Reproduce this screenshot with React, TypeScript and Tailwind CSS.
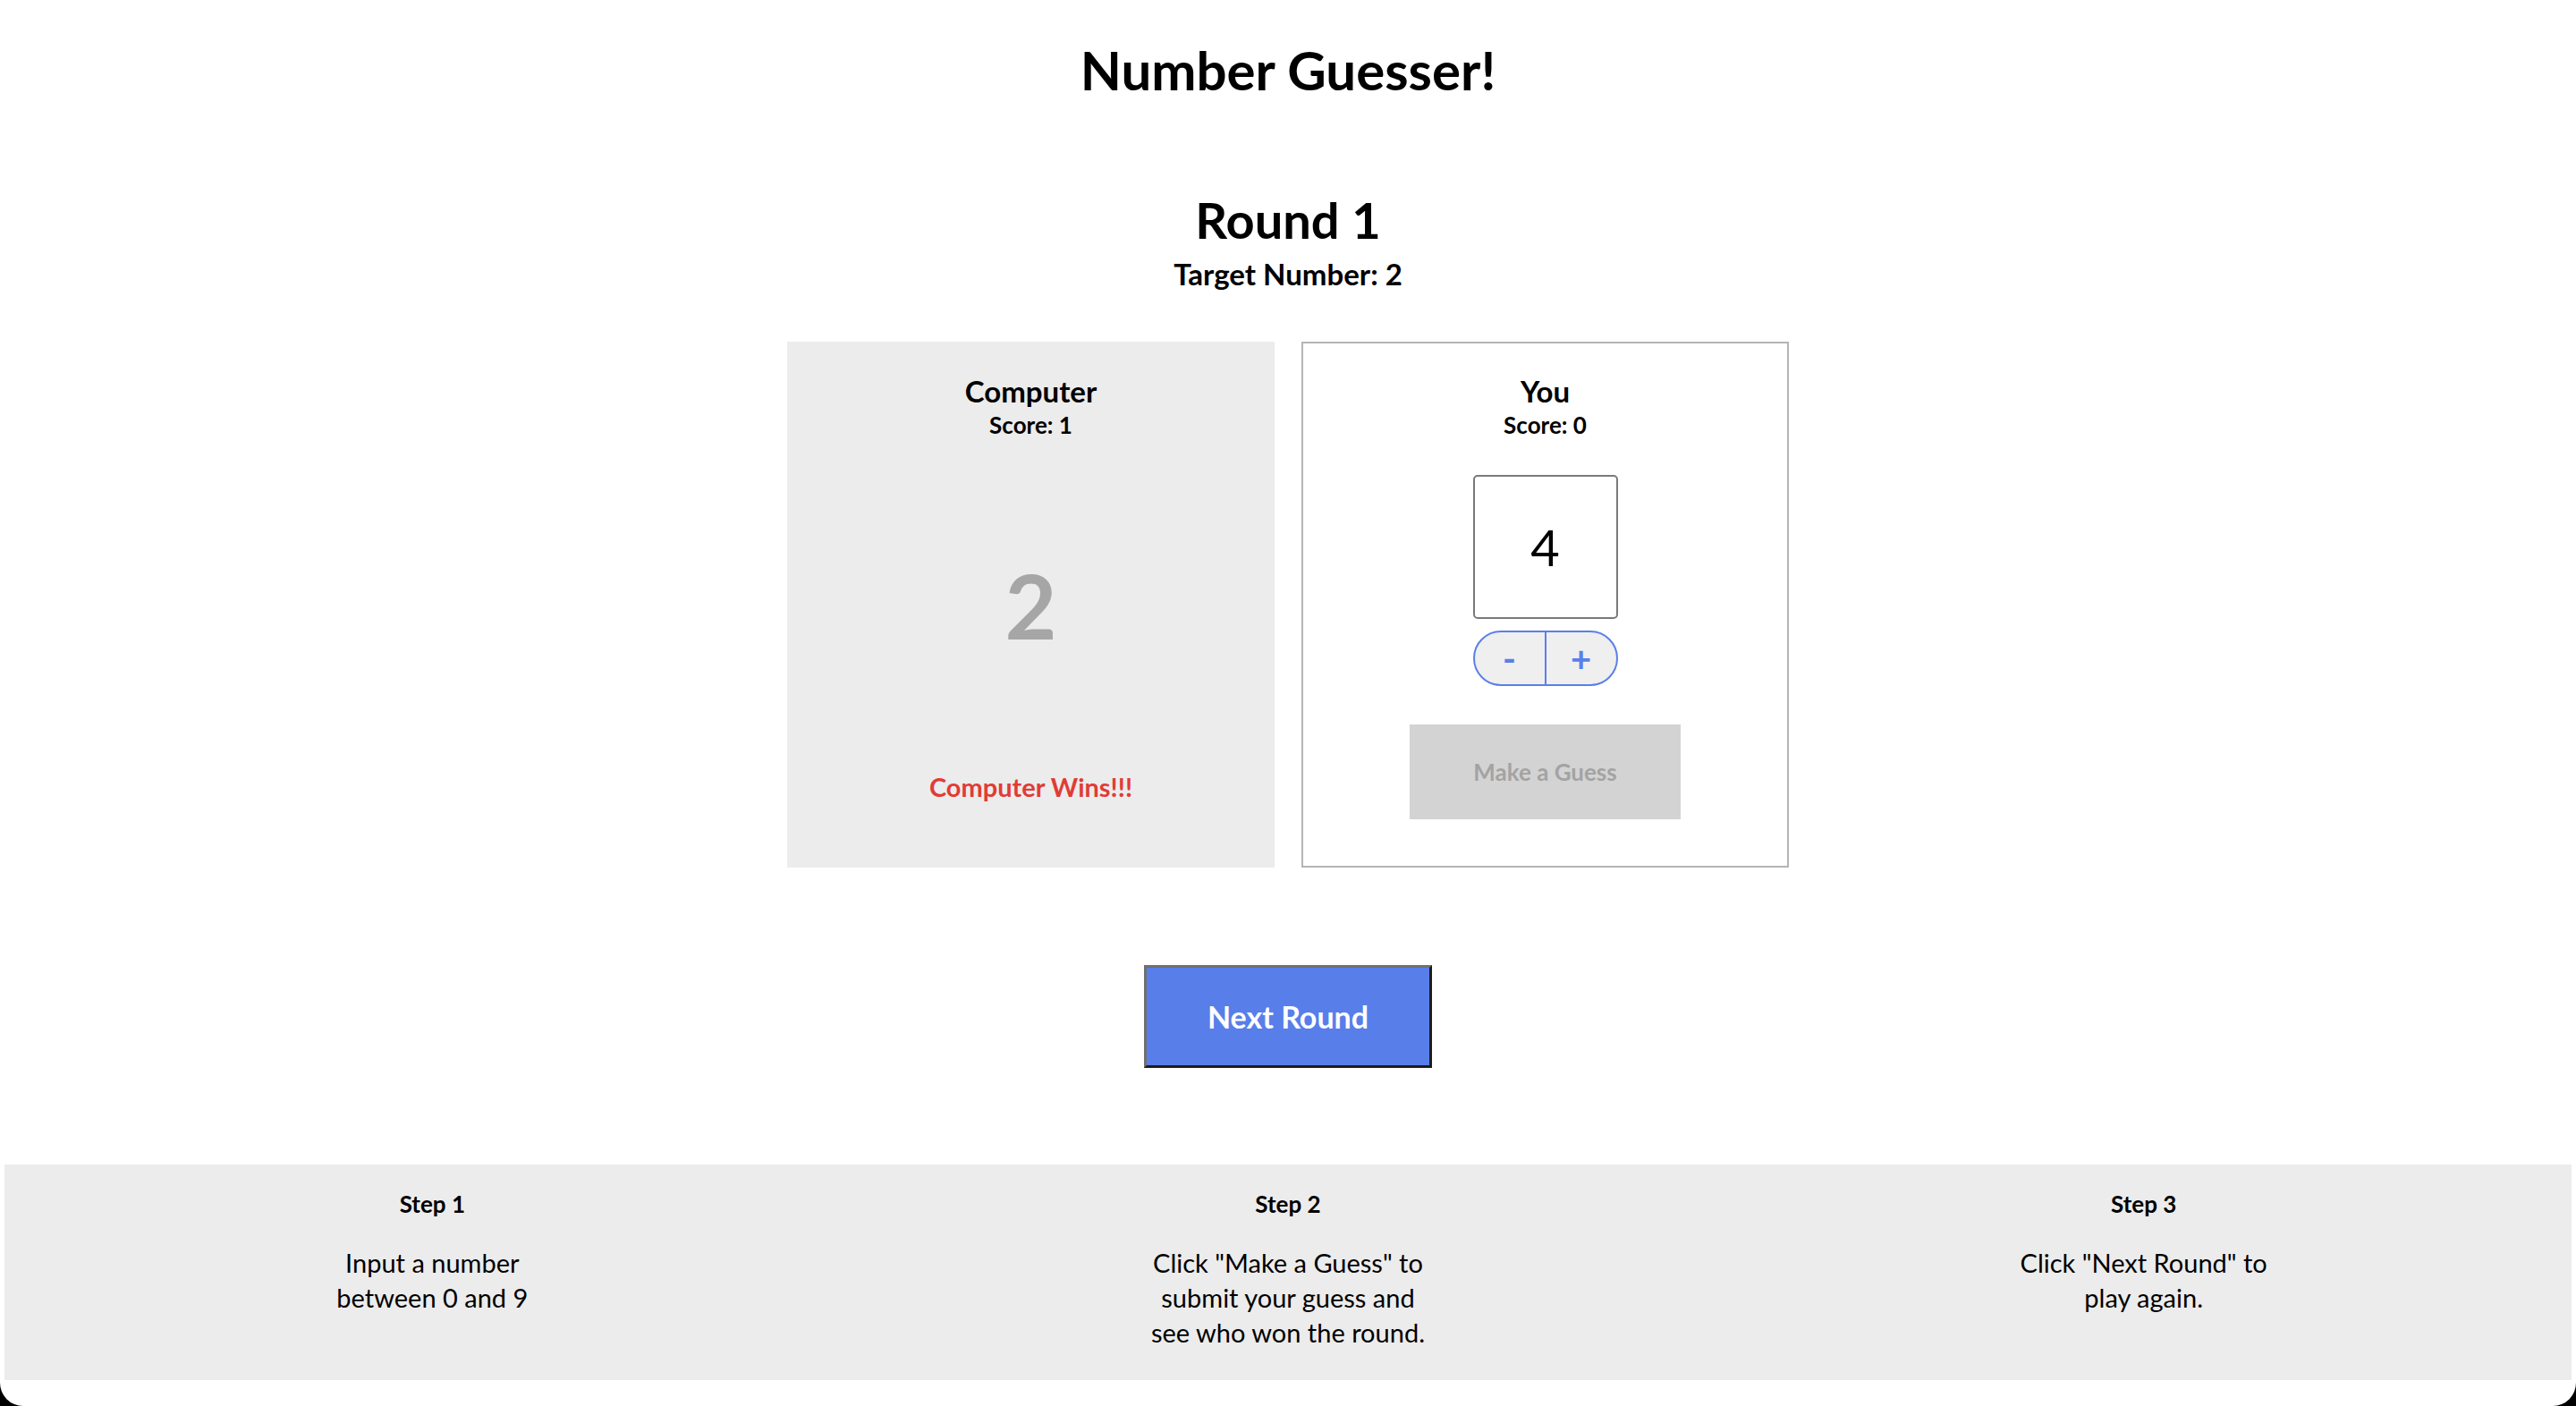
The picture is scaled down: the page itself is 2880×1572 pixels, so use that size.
export default function App() {
  const font = "font-['Lato','Noto_Sans',sans-serif]";
  return (
    <div className={`h-[1572px] w-full bg-black ${font}`}>
      <div className="flex h-full flex-col items-center rounded-b-[26px] bg-white text-black">
        <h1 className="mt-[44px] text-[60px] font-bold leading-[68px]">Number Guesser!</h1>
        <h2 className="mt-[103px] text-[56px] font-bold leading-[62px]">Round 1</h2>
        <p className="mt-[10px] text-[33px] font-bold leading-[38px]">Target Number: 2</p>

        <div className="mt-[57px] flex gap-[30px]">
          <div className="flex h-[588px] w-[545px] flex-col items-center bg-[#ececec] pt-[35px]">
            <div className="text-[33px] font-bold leading-[40px]">Computer</div>
            <div className="mt-[3px] text-[26px] font-bold leading-[30px]">Score: 1</div>
            <div className="mt-[126px] text-[100px] font-bold leading-[120px] text-[#a6a6a6]">2</div>
            <div className="mt-[126px] text-[29px] font-bold leading-[36px] text-[#e03c36]">Computer Wins!!!</div>
          </div>
          <div className="flex h-[588px] w-[545px] flex-col items-center border-2 border-[#b5b5b5] bg-white pt-[33px]">
            <div className="text-[33px] font-bold leading-[40px]">You</div>
            <div className="mt-[3px] text-[26px] font-bold leading-[30px]">Score: 0</div>
            <div className="mt-[41px] flex h-[161px] w-[162px] items-center justify-center rounded-[5px] border-2 border-[#7a7a7a] text-[56px] leading-none">
              4
            </div>
            <div className="mt-[13px] flex h-[62px] w-[162px] overflow-hidden rounded-full border-2 border-[#5b7fe9] bg-[#efefef]">
              <div className="flex flex-1 items-center justify-center border-r-2 border-[#5b7fe9] text-[40px] font-bold leading-none text-[#5b7fe9]">
                -
              </div>
              <div className="flex flex-1 items-center justify-center text-[40px] font-bold leading-none text-[#5b7fe9]">
                +
              </div>
            </div>
            <div className="mt-[43px] flex h-[106px] w-[303px] items-center justify-center bg-[#d3d3d3] text-[26px] font-bold text-[#a3a3a3]">
              Make a Guess
            </div>
          </div>
        </div>

        <div className="mt-[109px] flex h-[115px] w-[322px] items-center justify-center border-[3px] border-b-[#1c1c1c] border-l-[#707070] border-r-[#1c1c1c] border-t-[#707070] bg-[#587eea] text-[34px] font-bold text-white">
          Next Round
        </div>

        <div className="mt-[108px] grid h-[241px] w-[calc(100%-10px)] grid-cols-3 bg-[#ececec] pt-[28px]">
          <div className="flex flex-col items-center">
            <div className="text-[26px] font-bold leading-[32px]">Step 1</div>
            <div className="mt-[30px] text-center text-[29px] leading-[39px]">
              Input a number
              <br />
              between 0 and 9
            </div>
          </div>
          <div className="flex flex-col items-center">
            <div className="text-[26px] font-bold leading-[32px]">Step 2</div>
            <div className="mt-[30px] text-center text-[29px] leading-[39px]">
              Click "Make a Guess" to
              <br />
              submit your guess and
              <br />
              see who won the round.
            </div>
          </div>
          <div className="flex flex-col items-center">
            <div className="text-[26px] font-bold leading-[32px]">Step 3</div>
            <div className="mt-[30px] text-center text-[29px] leading-[39px]">
              Click "Next Round" to
              <br />
              play again.
            </div>
          </div>
        </div>
      </div>
    </div>
  );
}
